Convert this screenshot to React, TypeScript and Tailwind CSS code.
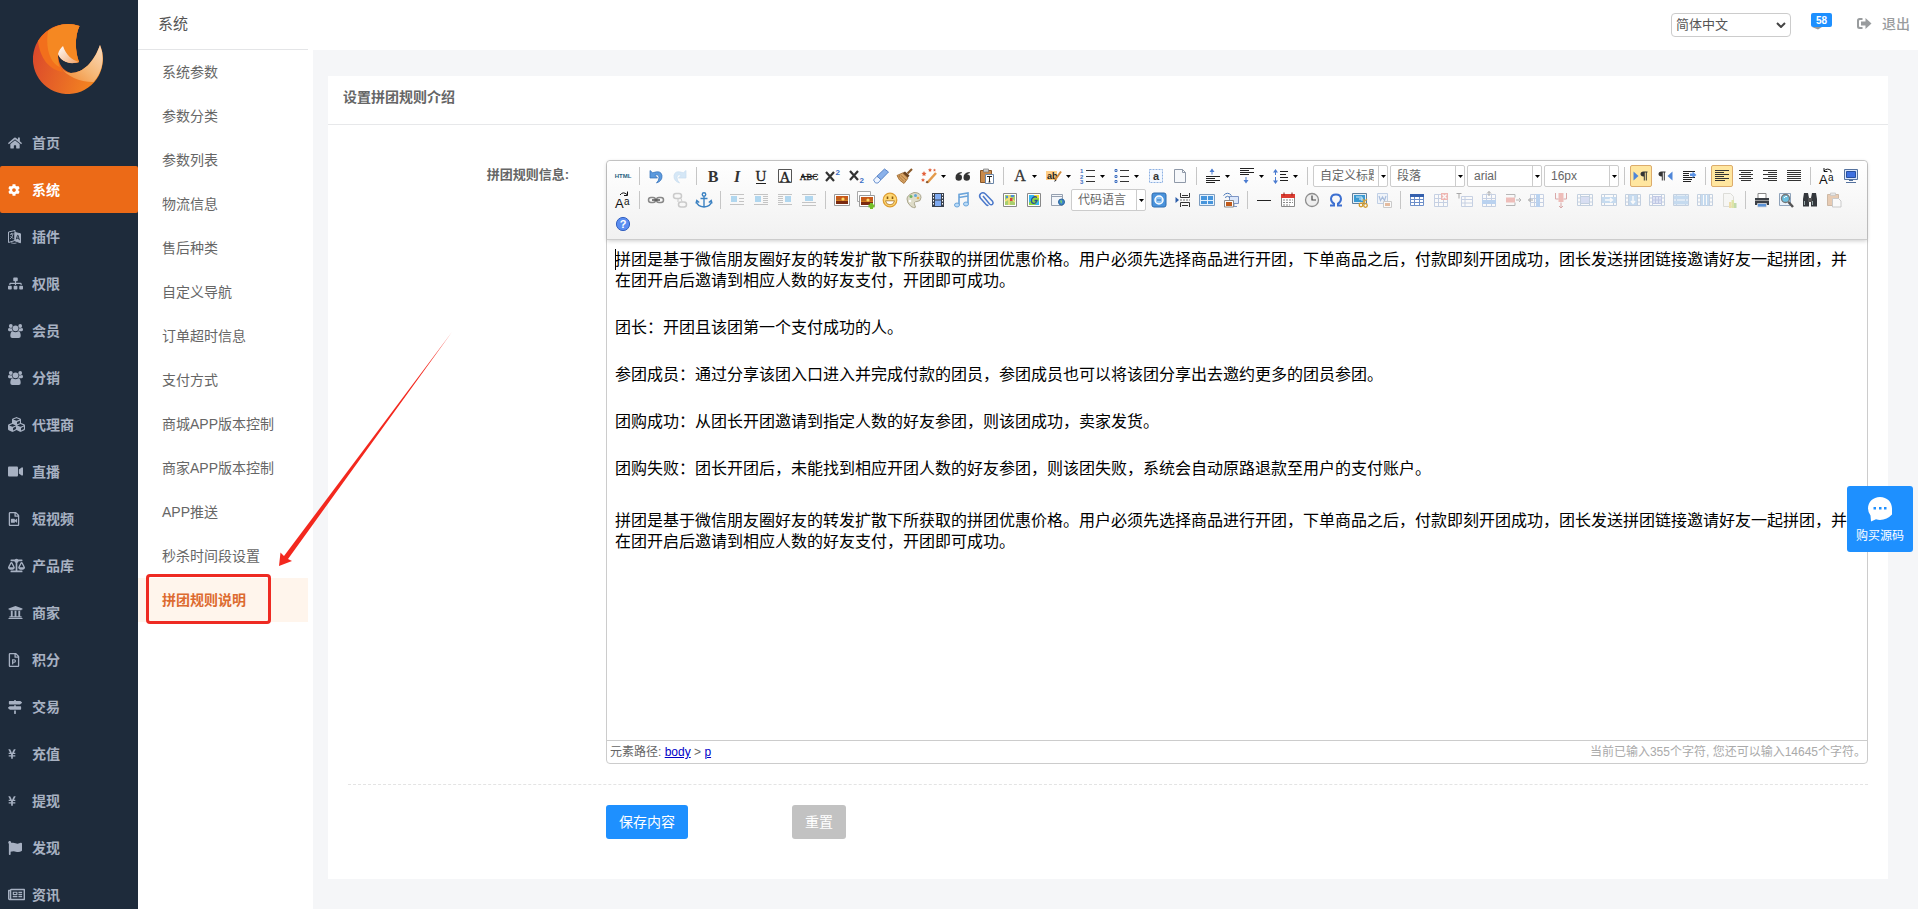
import type { ReactNode } from 'react'
import {
  FaBalanceScale,
  FaCog,
  FaCubes,
  FaFlag,
  FaHome,
  FaMapSigns,
  FaRegFilePowerpoint,
  FaRegFileVideo,
  FaRegNewspaper,
  FaSignOutAlt,
  FaSitemap,
  FaUniversity,
  FaVideo,
  FaYenSign,
} from 'react-icons/fa'

function GroupIcon() {
  return (
    <svg viewBox="0 0 15 14" className="h-3.5 w-[15px]" fill="currentColor">
      <circle cx="2.8" cy="2" r="1.9" />
      <circle cx="12.2" cy="2" r="1.9" />
      <circle cx="7.5" cy="4.3" r="2.9" />
      <path d="M0 5.5Q0 4 1 4q2 .8 3 .3Q4 6.300 5 7.200H1.200Q0 7 0 5.500zM15 5.500Q15 4 14 4q-2 .8-3 .3Q11 6.300 10 7.200h3.800Q15 7 15 5.500z" />
      <path d="M2.300 12Q2.300 7.300 4.800 7.300q2.700 1.800 5.400 0 2.500 0 2.500 4.700 0 2-2 2H4.300q-2 0-2-2z" />
    </svg>
  )
}

function LanguageIcon() {
  return (
    <svg viewBox="0 0 13 14" className="h-3.5 w-[13px]" fill="none" stroke="currentColor">
      <path d="M.5 2 7 .5v10L.5 12.500z" />
      <path d="M2 4.500l3.500-1M3.500 3v1.500M2 9q2.500-1.500 3-5M2.500 6q1 2 3 2.500" strokeWidth=".8" />
      <path d="M7 2.500l5.500 1.300v9L7 10.800z" fill="currentColor" />
      <path d="M8.300 9.300l1.200-4h.6l1.300 4.800M8.700 8l2.200.5" stroke="#1e2b3b" strokeWidth=".9" />
      <path d="M3 12.800q3 1.200 5.500.2" strokeWidth=".8" />
    </svg>
  )
}

const mainMenu: { label: string; icon: ReactNode }[] = [
  { label: '首页', icon: <FaHome className="h-3.5 w-3.5" /> },
  { label: '系统', icon: <FaCog className="h-3 w-3" /> },
  { label: '插件', icon: <LanguageIcon /> },
  { label: '权限', icon: <FaSitemap className="h-[15px] w-[15px]" /> },
  { label: '会员', icon: <GroupIcon /> },
  { label: '分销', icon: <GroupIcon /> },
  { label: '代理商', icon: <FaCubes className="h-[17px] w-[17px]" /> },
  { label: '直播', icon: <FaVideo className="h-[15px] w-[15px]" /> },
  { label: '短视频', icon: <FaRegFileVideo className="-ml-px h-3.5 w-3.5" /> },
  { label: '产品库', icon: <FaBalanceScale className="h-[17px] w-[17px]" /> },
  { label: '商家', icon: <FaUniversity className="h-[15px] w-[15px]" /> },
  { label: '积分', icon: <FaRegFilePowerpoint className="-ml-px h-3.5 w-3.5" /> },
  { label: '交易', icon: <FaMapSigns className="h-3.5 w-3.5" /> },
  { label: '充值', icon: <FaYenSign className="h-3 w-2" /> },
  { label: '提现', icon: <FaYenSign className="h-3 w-2" /> },
  { label: '发现', icon: <FaFlag className="h-3.5 w-3.5" /> },
  { label: '资讯', icon: <FaRegNewspaper className="h-[17px] w-[17px]" /> },
]

const subMenu = [
  '系统参数',
  '参数分类',
  '参数列表',
  '物流信息',
  '售后种类',
  '自定义导航',
  '订单超时信息',
  '支付方式',
  '商城APP版本控制',
  '商家APP版本控制',
  'APP推送',
  '秒杀时间段设置',
  '拼团规则说明',
]

const groupRule =
  '拼团是基于微信朋友圈好友的转发扩散下所获取的拼团优惠价格。用户必须先选择商品进行开团，下单商品之后，付款即刻开团成功，团长发送拼团链接邀请好友一起拼团，并在团开启后邀请到相应人数的好友支付，开团即可成功。'

const paragraphs = [
  '团长：开团且该团第一个支付成功的人。',
  '参团成员：通过分享该团入口进入并完成付款的团员，参团成员也可以将该团分享出去邀约更多的团员参团。',
  '团购成功：从团长开团邀请到指定人数的好友参团，则该团成功，卖家发货。',
  '团购失败：团长开团后，未能找到相应开团人数的好友参团，则该团失败，系统会自动原路退款至用户的支付账户。',
]

const serif = 'Liberation Serif, serif'
const sans = 'Liberation Sans, Arial, sans-serif'

const grid = (
  <path d="M3.500 4.500h13v12h-13zM3.500 8.500h13M3.500 12.500h13M7.500 4.500v12M12.500 4.500v12" fill="#fff" stroke="#7d97c4" />
)

const frame = (
  <path d="M2.500 4.500h15v11h-15zM2.500 8h3M2.500 12h3M14.500 8h3M14.500 12h3M5.500 4.500v11M14.500 4.500v11" fill="#fff" stroke="#7796bd" />
)

const caseSwap = (
  <>
    <text x="2" y="17.500" fontSize="13" fontFamily={sans} fill="#111">A</text>
    <text x="11" y="15" fontSize="10" fontFamily={sans} fill="#111">a</text>
  </>
)

const photo = (
  <>
    <path d="M2.500 4.500h15v11h-15z" fill="#fff" stroke="#9a9a9a" />
    <path d="M4 6h12v8H4z" fill="#7a2a10" />
    <path d="M4 6h12v3H4z" fill="#c85a1a" />
    <path d="M4 9.500h12v1.200H4z" fill="#f6a02c" />
    <circle cx="11" cy="9" r="1.600" fill="#ffd766" />
  </>
)

const icons: Record<string, ReactNode> = {
  html: <text x="10" y="12" fontSize="6" fontWeight="700" textAnchor="middle" fontFamily={sans} fill="#28627f">HTML</text>,
  undo: (
    <path d="M4 4.500v7.500h7.500L9 9.300q3.600-1.500 4 2 .2 3-2.500 5.700 6-2 5.500-7.500-1-5.800-9.300-2.700z" fill="#5c9ade" stroke="#2f6db8" strokeWidth=".7" />
  ),
  redo: (
    <path d="M16 4.500v7.500H8.500L11 9.300q-3.600-1.500-4 2-.2 3 2.500 5.700-6-2-5.500-7.500 1-5.800 9.300-2.700z" fill="#9cc8ee" stroke="#7fb2e0" strokeWidth=".7" />
  ),
  bold: <text x="10" y="16" fontSize="16" fontWeight="700" textAnchor="middle" fontFamily={serif} fill="#333">B</text>,
  italic: <text x="10" y="16" fontSize="16" fontWeight="700" fontStyle="italic" textAnchor="middle" fontFamily={serif} fill="#333">I</text>,
  underline: (
    <>
      <text x="10" y="15" fontSize="15" textAnchor="middle" fontFamily={serif} fill="#222" stroke="#222" strokeWidth=".3">U</text>
      <path d="M5 17.500h10" stroke="#222" />
    </>
  ),
  border: (
    <>
      <path d="M3.500 3.500h13v13h-13z" fill="none" stroke="#555" />
      <text x="10" y="15.500" fontSize="15" textAnchor="middle" fontFamily={serif} fill="#222" stroke="#222" strokeWidth=".3">A</text>
    </>
  ),
  strike: (
    <>
      <text x="10" y="14" fontSize="9" textAnchor="middle" fontFamily={serif} fill="#222" stroke="#222" strokeWidth=".3">ABC</text>
      <path d="M2 10.500h16" stroke="#222" />
    </>
  ),
  sup: (
    <>
      <path d="M3 6l8 9M11 6l-8 9" stroke="#333" strokeWidth="2.200" />
      <text x="12.500" y="8.500" fontSize="8" fontWeight="700" fontFamily={sans} fill="#3a6fc4">2</text>
    </>
  ),
  sub: (
    <>
      <path d="M3 5l8 9M11 5l-8 9" stroke="#333" strokeWidth="2.200" />
      <text x="12.500" y="17" fontSize="8" fontWeight="700" fontFamily={sans} fill="#3a6fc4">2</text>
    </>
  ),
  eraser: (
    <>
      <path d="M2.500 14 6 10.200l4 3.500L7 17H4.500z" fill="#eef4ff" stroke="#6c93ce" />
      <path d="M6 10.200 13.500 3l4 3L10 13.700z" fill="#8ab1ea" stroke="#5a84c6" />
    </>
  ),
  brush: (
    <>
      <path d="M17 3 12.500 7.500" stroke="#8a5a2b" strokeWidth="2.200" />
      <path d="M10 5.500l4.500 4-1.800 2.500-5.700-4.700z" fill="#6d4421" />
      <path d="M7.500 7 2 9.500q1.500 5 7 8l4-5.300z" fill="#d9a567" stroke="#9a6428" strokeWidth=".8" />
      <path d="M4 10.500l5 5M6 9.500l5 4.500M5 9l-1 2" stroke="#9a6428" strokeWidth=".7" />
    </>
  ),
  wand: (
    <>
      <path d="M17 7 8.500 16.500" stroke="#e39a4a" strokeWidth="2.500" />
      <path d="M8.800 16.800l-1.500-1.300" stroke="#7a4a22" strokeWidth="2" />
      <path d="M5 5l.8 1.700 1.700.3-1.300 1.200.3 1.800L5 9.200l-1.500.8.300-1.800L2.500 7l1.700-.3zM11 2l.6 1.300 1.400.2-1 1 .2 1.300-1.200-.6-1.200.6.200-1.300-1-1 1.400-.2zM4 12l.6 1.200 1.400.2-1 1 .2 1.300L4 15l-1.200.7.200-1.300-1-1 1.400-.2zM15.500 2.500l.4 1 1.100.2-.8.700.2 1-.9-.5-.9.500.2-1-.8-.7 1.100-.2z" fill="#e2603a" />
    </>
  ),
  quote: (
    <path d="M8.500 6Q2.500 6.500 2.500 11.500q0 3.200 3.200 3.200t3.300-3.200-2.800-3Q6.500 7.500 9 7zM16.500 6q-6 .5-6 5.500 0 3.200 3.200 3.200t3.300-3.200-2.800-3Q14.500 7.500 17 7z" fill="#333" />
  ),
  pasteText: (
    <>
      <path d="M3.500 4.500h11v12h-11z" fill="#c98a4b" stroke="#87572a" />
      <path d="M6.500 3h5v3h-5z" fill="#ccc" stroke="#777" strokeWidth=".7" />
      <path d="M8.500 8.500h8v9h-8z" fill="#fff" stroke="#6b86a8" />
      <path d="M10 10.500h5M12.500 10.500V16M11.500 16h2" stroke="#222" />
    </>
  ),
  foreColor: <text x="10" y="15" fontSize="16" textAnchor="middle" fontFamily={serif} fill="#333" stroke="#333" strokeWidth=".3">A</text>,
  backColor: (
    <>
      <path d="M2 5h11v9H2z" fill="#ffcf87" />
      <text x="3" y="12.500" fontSize="9" fontWeight="700" fontFamily={sans} fill="#222">ab</text>
      <path d="M17 5.500 11 14" stroke="#d08a3c" strokeWidth="2" />
      <path d="M11.300 13.500 10 16l2.500-1.500z" fill="#333" />
    </>
  ),
  orderedList: (
    <>
      <text x="2" y="7" fontSize="6" fontWeight="700" fontFamily={sans} fill="#3e6fc0">1</text>
      <text x="2" y="12.500" fontSize="6" fontWeight="700" fontFamily={sans} fill="#3e6fc0">2</text>
      <text x="2" y="18" fontSize="6" fontWeight="700" fontFamily={sans} fill="#3e6fc0">3</text>
      <path d="M8 4.500h9M8 10.500h9M8 15.500h9" stroke="#333" />
    </>
  ),
  bulletList: (
    <>
      <path d="M8 4.500h9M8 10.500h9M8 15.500h9" stroke="#333" />
      <path d="M3 3.500h2v2H3zM3 9.500h2v2H3zM3 14.500h2v2H3z" fill="#fff" stroke="#3e6fc0" />
    </>
  ),
  selectAll: (
    <>
      <rect x="3.500" y="3.500" width="13" height="13" fill="#f3f8ff" stroke="#8db1e2" strokeDasharray="2 1" />
      <text x="10" y="14" fontSize="11" fontWeight="700" textAnchor="middle" fontFamily={sans} fill="#333">a</text>
    </>
  ),
  clearDoc: <path d="M4.500 3.500h8l3 3v10h-11zM12.500 3.500v3h3" fill="#f6f8fb" stroke="#8f99a8" />,
  spaceTop: (
    <>
      <path d="M9 8.500V3.500" stroke="#4a7bd0" />
      <path d="M6.500 6 9 2.500 11.500 6z" fill="#4a7bd0" />
      <path d="M3 10.500h14M3 12.500h9M3 14.500h14M3 16.500h9" stroke="#222" />
    </>
  ),
  spaceBottom: (
    <>
      <path d="M3 2.500h14M3 4.500h9M3 6.500h14M3 8.500h9" stroke="#222" />
      <path d="M9 11v5" stroke="#4a7bd0" />
      <path d="M6.500 14 9 17.500l2.500-3.500z" fill="#4a7bd0" />
    </>
  ),
  lineHeight: (
    <>
      <path d="M4.500 4v13" stroke="#4a7bd0" strokeDasharray="5 2" />
      <path d="M2 6.500 4.500 3 7 6.500zM2 14.500 4.500 18 7 14.500z" fill="#4a7bd0" />
      <path d="M9 5.500h8M9 8.500h6M9 11.500h8M9 14.500h8" stroke="#222" />
    </>
  ),
  ltr: (
    <>
      <path d="M2.500 5.500v9L7.500 10z" fill="#4f86d8" />
      <path d="M16.500 5.500h-4q-3 .3-3 2.500t3 2.500h.3v4h1v-8h1v8h1v-8h.7z" fill="#333" />
    </>
  ),
  rtl: (
    <>
      <path d="M17.500 5.500v9L12.500 10z" fill="#4f86d8" />
      <path d="M10.500 5.500h-4q-3 .3-3 2.500t3 2.500h.3v4h1v-8h1v8h1v-8h.7z" fill="#333" />
    </>
  ),
  indent: (
    <>
      <path d="M4 5.500h12M4 7.500h6M4 9.500h6M4 11.500h12M4 13.500h9M4 15.500h8" stroke="#222" />
      <path d="M11 7.500h2.500v-2L17.500 9l-4 3v-2H11z" fill="#5b93e6" />
    </>
  ),
  alignLeft: <path d="M3 4.500h14M3 6.500h9M3 8.500h14M3 10.500h9M3 12.500h14M3 14.500h10" stroke="#333" />,
  alignCenter: <path d="M3 4.500h14M5 6.500h10M3 8.500h14M5 10.500h10M3 12.500h14M5 14.500h10" stroke="#333" />,
  alignRight: <path d="M3 4.500h14M8 6.500h9M3 8.500h14M8 10.500h9M3 12.500h14M8 14.500h9" stroke="#333" />,
  justify: <path d="M3 4.500h14M3 6.500h14M3 8.500h14M3 10.500h14M3 12.500h14M3 14.500h14" stroke="#333" />,
  toUpper: (
    <>
      {caseSwap}
      <path d="M7 5q3-3.500 7-.5v2M7 2v3.500h3.500" fill="none" stroke="#111" />
    </>
  ),
  toLower: (
    <>
      {caseSwap}
      <path d="M7 5q3-4 7-.5M14.500 1.500v4H11" fill="none" stroke="#111" />
    </>
  ),
  fullscreen: (
    <>
      <path d="M3.500 3.500h13v10h-13z" fill="#dbe6fa" stroke="#55729e" />
      <path d="M5.500 5.500h9v6h-9z" fill="#3d6fe0" stroke="#274f9e" />
      <path d="M5 16.500h10M8 14.500h4" stroke="#55729e" />
    </>
  ),
  link: (
    <>
      <rect x="2.500" y="7.500" width="7" height="5" rx="2.500" fill="none" stroke="#888" strokeWidth="1.500" />
      <rect x="10.500" y="7.500" width="7" height="5" rx="2.500" fill="none" stroke="#888" strokeWidth="1.500" />
      <path d="M6 10h8" stroke="#555" strokeWidth="1.500" />
    </>
  ),
  unlink: (
    <>
      <rect x="3.500" y="3.500" width="8" height="5" rx="2.500" fill="none" stroke="#888" strokeWidth="1.500" />
      <rect x="8.500" y="12" width="8" height="5" rx="2.500" fill="none" stroke="#888" strokeWidth="1.500" />
      <path d="M8 9v3M11 8.500l1 3" stroke="#888" />
    </>
  ),
  anchor: (
    <path d="M10 6.500V17M6.500 8.500h7M2.500 11q.5 5.500 7.500 6 7-.5 7.500-6M2 13.500l.8-3 2.400 2M18 13.500l-.8-3-2.400 2M10 2.800a1.700 1.700 0 1 1 0 3.500 1.700 1.700 0 0 1 0-3.500" fill="none" stroke="#3c82c2" strokeWidth="1.400" />
  ),
  floatLeft: (
    <>
      <path d="M3 4.500h14M12 8.500h5M12 11.500h5M3 14.500h14" stroke="#777" />
      <path d="M4 6h6v6H4z" fill="#4aa6e2" />
    </>
  ),
  floatNone: (
    <>
      <path d="M3 4.500h14M12 6.500h5M12 8.500h5M12 10.500h5M12 12.500h5M3 14.500h14" stroke="#777" />
      <path d="M4 6h6v6H4z" fill="#4aa6e2" />
    </>
  ),
  floatRight: (
    <>
      <path d="M3 4.500h14M3 6.500h5M3 8.500h5M3 10.500h5M3 12.500h5M3 14.500h14" stroke="#777" />
      <path d="M10 6h6v6h-6z" fill="#4aa6e2" />
    </>
  ),
  floatCenter: (
    <>
      <path d="M3 4.500h14M3 12.500h14M3 15.500h14" stroke="#777" />
      <path d="M6 6h8v5H6z" fill="#4aa6e2" />
    </>
  ),
  image: photo,
  images: (
    <>
      <path d="M1.500 1.500h13v10h-13z" fill="#fff" stroke="#aaa" />
      <g transform="translate(1 1)">{photo}</g>
      <path d="M15.500 13v6M12.500 16h6" stroke="#74bf2c" strokeWidth="3" />
    </>
  ),
  emoji: (
    <>
      <circle cx="10" cy="10" r="6.800" fill="#ffd873" stroke="#dd9c32" strokeWidth="1.200" />
      <path d="M7.500 6.500V9M12.500 6.500V9" stroke="#8a5a12" strokeWidth="1.600" />
      <path d="M5.500 10.800h9q-.6 4-4.500 4t-4.500-4z" fill="#fff" stroke="#a8701c" strokeWidth=".8" />
    </>
  ),
  scrawl: (
    <>
      <path d="M10 2.500q7 0 7 5 0 4-4 4t-2 4-4 1Q3 13 3 9t7-6.500z" fill="#dedcc8" stroke="#aaa58c" />
      <circle cx="7" cy="6.500" r="1.500" fill="#70b560" />
      <circle cx="11.500" cy="5.500" r="1.500" fill="#5fa6db" />
      <circle cx="14" cy="8" r="1.300" fill="#e8b04e" />
      <circle cx="6" cy="11" r="1.300" fill="#fff" />
    </>
  ),
  video: (
    <>
      <path d="M4 3h12v14H4z" fill="#39414e" />
      <path d="M7 4h6v5.500H7zM7 10.500h6V16H7z" fill="#7faaf0" />
      <path d="M5.500 4v12M14.500 4v12" stroke="#fff" strokeDasharray="1.500 1.500" />
    </>
  ),
  music: (
    <>
      <path d="M7 15V4.500l9-1.500v10.500M7 7.500 16 6" fill="none" stroke="#6ba4da" strokeWidth="1.600" />
      <ellipse cx="5" cy="15" rx="2.500" ry="2" fill="#b9dbf8" stroke="#6ba4da" />
      <ellipse cx="14" cy="14" rx="2.500" ry="2" fill="#b9dbf8" stroke="#6ba4da" />
    </>
  ),
  attachment: (
    <path d="M7 6l6.500 8q1.800 1.500 3 .3 1.200-1.300 0-3L9.500 4Q7 1.800 4.800 3.500 2.500 5.500 4.500 8.200L10.500 15q1 .8 1.800 0" fill="none" stroke="#4a78ca" strokeWidth="1.500" />
  ),
  map: (
    <>
      <path d="M3.500 3.500h13v13h-13z" fill="#fff" stroke="#888" />
      <path d="M5 5h10v10H5z" fill="#a8cf6f" />
      <path d="M5 11l5-3 5 4M9 5v10" stroke="#f6e07e" strokeWidth="1.500" fill="none" />
      <path d="M6 6h2v2H6zM11 5h3v2h-3z" fill="#4e8dd8" />
      <path d="M10 8h2.500v3H10z" fill="#d4453c" />
    </>
  ),
  gmap: (
    <>
      <path d="M3.500 3.500h13v13h-13z" fill="#fff" stroke="#888" />
      <path d="M5 5h10v10H5z" fill="#8fd63c" />
      <path d="M5 5h6L5 13zM11 15l4-5v5z" fill="#35b7f0" />
      <path d="M10 5h5v3h-4z" fill="#f4e034" />
      <path d="M13 7.500q-2-1.500-4 0t-1.500 4 4 1.500l1.500-2.500h-2.500" fill="none" stroke="#244f9e" strokeWidth="1.300" />
    </>
  ),
  insertFrame: (
    <>
      <path d="M3.500 4.500h11v11h-11zM3.500 6.500h11" fill="#f3f6fa" stroke="#95a0b0" />
      <circle cx="13.500" cy="12" r="3" fill="#3c86c8" stroke="#2c649b" />
      <path d="M12 10.500q2-1 2 1t-1 2z" fill="#7fd06a" />
    </>
  ),
  webapp: (
    <>
      <rect x="3" y="3" width="14" height="14" rx="2" fill="#4a93dc" stroke="#2e6cb0" />
      <circle cx="10" cy="10" r="4" fill="#8cc3f5" stroke="#fff" strokeWidth="1.500" />
      <path d="M8 10h4" stroke="#2e6cb0" />
    </>
  ),
  pageBreak: (
    <>
      <path d="M7.500 3v4.500h9V3M7.500 17v-4.500h9V17M9 5.500h6M9 15.500h6" fill="none" stroke="#333" />
      <path d="M2.500 7v6L6 10z" fill="#2c5da8" />
      <path d="M7 10h10" stroke="#777" strokeDasharray="2 1" />
    </>
  ),
  template: (
    <>
      <path d="M2.500 4.500h15v11h-15z" fill="#e4f1fd" stroke="#7b9cc0" />
      <path d="M4 6h6v4H4zM11 6h5v4h-5zM4 11h6v3H4zM11 11h5v3h-5z" fill="#4695dc" />
    </>
  ),
  screenshot: (
    <>
      <path d="M8.500 6.500h9v7h-9z" fill="#dbe7fb" stroke="#7d95c4" />
      <path d="M13 14v2.500M10 16.500h6" stroke="#7d95c4" />
      <path d="M2.500 5.500q4-4.500 8 0M4 7.500q2.500-2.500 5 0" fill="none" stroke="#4a78b8" />
      <path d="M3.500 10.500h9v6.500h-9z" fill="#fff" stroke="#888" />
      <path d="M5 12h6v4H5z" fill="#c25a1a" />
    </>
  ),
  rule: <path d="M3 10.500h14" stroke="#222" />,
  date: (
    <>
      <path d="M3.500 4.500h13v12h-13z" fill="#fff" stroke="#888" />
      <path d="M3 4h14v4H3z" fill="#dc3c32" />
      <path d="M6 2.500v3M14 2.500v3" stroke="#8a1c16" />
      <path d="M5 10h10M5 12.500h10M5 15h7" stroke="#888" strokeDasharray="2 1" strokeWidth="1.200" />
    </>
  ),
  time: (
    <>
      <circle cx="10" cy="10" r="6.500" fill="#eee" stroke="#8d8d8d" strokeWidth="1.300" />
      <path d="M10 5.500V10h4" fill="none" stroke="#444" strokeWidth="1.200" />
    </>
  ),
  omega: <path d="M4 15.500h4v-1.800Q5 12 5 8.800q.3-4.300 5-4.300t5 4.300q0 3.200-3 4.900v1.800h4" fill="none" stroke="#3c6fd0" strokeWidth="2" />,
  snap: (
    <>
      <path d="M2.500 3.500h14v10h-14z" fill="#e4eef6" stroke="#5f7f9c" />
      <path d="M4 5h11v7H4z" fill="#3a9ad2" />
      <path d="M6 7h6v4M9 9h4" stroke="#cfeafb" fill="none" />
      <circle cx="11" cy="15" r="1.800" fill="none" stroke="#d09a2c" strokeWidth="1.300" />
      <circle cx="15.500" cy="15.500" r="1.800" fill="none" stroke="#d09a2c" strokeWidth="1.300" />
      <path d="M12 13.500 17 9M15 13.500 13 9" stroke="#d8a43c" strokeWidth="1.200" />
    </>
  ),
  wordImage: (
    <>
      <path d="M3.500 3.500h10v10h-10z" fill="#e4eefb" stroke="#6d93c8" />
      <path d="M5 6l1.500 4.500L8.500 7l2 3.500L12 6" fill="none" stroke="#3467b4" strokeWidth="1.200" />
      <path d="M9.500 11.500h8v6h-8z" fill="#fff" stroke="#888" />
      <path d="M11 13h5v3h-5z" fill="#c8641e" />
    </>
  ),
  table: (
    <>
      <path d="M3.500 4.500h13v11h-13zM3.500 9.500h13M3.500 12.500h13M7.500 5v10.500M12.500 5v10.500" fill="#fff" stroke="#6d8fc9" />
      <path d="M3 4h14v3H3z" fill="#3560ad" />
    </>
  ),
  deleteTable: (
    <>
      {grid}
      <path d="M10 3h7v7h-7z" fill="#e0574d" />
      <path d="M11.500 4.500l4 4M15.500 4.500l-4 4" stroke="#fff" strokeWidth="1.300" />
    </>
  ),
  titleRow: (
    <>
      <path d="M6.500 6.500h11v10h-11zM6.500 9.500h11M6.500 13h11M10 6.500v10" fill="#fff" stroke="#7d97c4" />
      <path d="M1.500 3.500h5M4 3.500v5" stroke="#333" />
    </>
  ),
  insertRow: (
    <>
      {grid}
      <path d="M3 10h14v4H3z" fill="#5e9be4" />
      <path d="M10 6V1.500M8 3.500l2-2 2 2" fill="none" stroke="#333" />
    </>
  ),
  deleteRow: (
    <>
      <path d="M3 7.500h9v5H3z" fill="#e0665c" />
      <path d="M3 4.500h9v3M3 15.500h9v-3M13 10h5M16 8l2 2-2 2" fill="none" stroke="#555" />
    </>
  ),
  insertCol: (
    <>
      {grid}
      <path d="M9 4h4v13H9z" fill="#5e9be4" />
      <path d="M6 10H1.500M3.500 8l-2 2 2 2" fill="none" stroke="#333" />
    </>
  ),
  deleteCol: (
    <>
      <path d="M7.500 3h5v9h-5z" fill="#e0665c" />
      <path d="M4.500 3v6h3M15.500 3v6h-3M10 12.500V18M8 16l2 2 2-2" fill="none" stroke="#a33" />
    </>
  ),
  mergeCells: (
    <>
      {frame}
      <path d="M5.500 6.500h9v7h-9z" fill="#aab9ea" stroke="#7796bd" />
    </>
  ),
  mergeRight: (
    <>
      {frame}
      <path d="M3 7h14v6H3z" fill="#7cb0e4" />
      <path d="M6 10h7M11 8l2.500 2-2.500 2" fill="none" stroke="#fff" strokeWidth="1.400" />
    </>
  ),
  mergeDown: (
    <>
      {frame}
      <path d="M6 5h8v10H6z" fill="#7cb0e4" />
      <path d="M10 6v7M8 11l2 2.500 2-2.500" fill="none" stroke="#fff" strokeWidth="1.400" />
    </>
  ),
  splitCells: (
    <>
      {frame}
      <path d="M5.500 6.500h9v7h-9zM5.500 10h9M8.500 6.500v7M11.500 6.500v7" fill="#b6c3ee" stroke="#6e83c8" />
    </>
  ),
  splitRows: (
    <>
      {frame}
      <path d="M3 5.500h14v4H3zM3 10.500h14v4H3z" fill="#7cb0e4" />
    </>
  ),
  splitCols: (
    <>
      {frame}
      <path d="M6 4.500h2v11H6zM9 4.500h2v11H9zM12 4.500h2v11h-2z" fill="#7cb0e4" />
    </>
  ),
  charts: (
    <>
      <path d="M4.500 3.500h7l3 3v10h-10z" fill="#f5f5f0" stroke="#b4b4a8" />
      <path d="M10 12h2.500v6H10z" fill="#e0b83c" />
      <path d="M12.500 10h2.500v8h-2.500z" fill="#b8c830" />
      <path d="M15 13h2.500v5H15z" fill="#74b03c" />
    </>
  ),
  print: (
    <>
      <path d="M6 3.500h8v5H6z" fill="#fff" stroke="#888" />
      <path d="M3 8h14v7H3z" fill="#3b3f45" />
      <path d="M3 10.500h14" stroke="#999" />
      <path d="M5.500 13.500h9v3.500h-9z" fill="#5b92d6" stroke="#ddd" strokeWidth=".8" />
    </>
  ),
  preview: (
    <>
      <path d="M3.500 3.500h11v12h-11z" fill="#eaf2fb" stroke="#8fa3ba" />
      <circle cx="9.500" cy="8.500" r="4" fill="#6cc0e0" stroke="#777" strokeWidth="1.300" />
      <path d="M8 8q1-2 3-1.500" stroke="#fff" fill="none" />
      <path d="M12.500 12l4.500 5" stroke="#555" strokeWidth="2.500" />
    </>
  ),
  search: (
    <>
      <path d="M4 3h4l1 5v8.500H3V9zM12 3h4l1 6v7.500h-6V8z" fill="#34383d" />
      <path d="M8 8h4v4H8z" fill="#555" />
      <path d="M4.500 11v4M12.500 11v4" stroke="#9aa" />
    </>
  ),
  paste: (
    <>
      <path d="M3.500 4.500h11v11h-11z" fill="#d08a4e" stroke="#8f5c2c" />
      <path d="M6.500 3h5v2.500h-5z" fill="#ccc" stroke="#777" strokeWidth=".7" />
      <path d="M8.500 8.500h6l2.500 2.500v6H8.500z" fill="#fff" stroke="#888" />
    </>
  ),
  help: (
    <>
      <circle cx="10" cy="10" r="6.600" fill="#5a8df0" stroke="#3561c0" />
      <text x="10" y="14" fontSize="11" fontWeight="700" textAnchor="middle" fontFamily={sans} fill="#fff">?</text>
    </>
  ),
}

type Tool =
  | { kind: 'button'; name: string; off?: boolean; active?: boolean; split?: boolean }
  | { kind: 'combo'; name: string }
  | { kind: 'sep' }

const sep: Tool = { kind: 'sep' }
const buttons = (...names: string[]): Tool[] => names.map((name) => ({ kind: 'button', name }))
const disabled = (...names: string[]): Tool[] => names.map((name) => ({ kind: 'button', name, off: true }))
const split = (...names: string[]): Tool[] => names.map((name) => ({ kind: 'button', name, split: true }))
const active = (name: string): Tool => ({ kind: 'button', name, active: true })
const combo = (name: string): Tool => ({ kind: 'combo', name })

const tools: Tool[] = [
  ...buttons('html'),
  sep,
  ...buttons('undo'),
  ...disabled('redo'),
  sep,
  ...buttons('bold', 'italic', 'underline', 'border', 'strike', 'sup', 'sub', 'eraser', 'brush'),
  ...split('wand'),
  ...buttons('quote', 'pasteText'),
  sep,
  ...split('foreColor', 'backColor', 'orderedList', 'bulletList'),
  ...buttons('selectAll', 'clearDoc'),
  sep,
  ...split('spaceTop', 'spaceBottom', 'lineHeight'),
  sep,
  combo('自定义标题'),
  combo('段落'),
  combo('arial'),
  combo('16px'),
  sep,
  active('ltr'),
  ...buttons('rtl', 'indent'),
  sep,
  active('alignLeft'),
  ...buttons('alignCenter', 'alignRight', 'justify'),
  sep,
  ...buttons('toUpper', 'fullscreen', 'toLower'),
  sep,
  ...buttons('link'),
  ...disabled('unlink'),
  ...buttons('anchor'),
  sep,
  ...disabled('floatLeft', 'floatNone', 'floatRight', 'floatCenter'),
  sep,
  ...buttons('image', 'images', 'emoji', 'scrawl', 'video', 'music', 'attachment', 'map', 'gmap', 'insertFrame'),
  combo('代码语言'),
  ...buttons('webapp', 'pageBreak', 'template', 'screenshot'),
  sep,
  ...buttons('rule', 'date', 'time', 'omega', 'snap'),
  ...disabled('wordImage'),
  sep,
  ...buttons('table'),
  ...disabled(
    'deleteTable',
    'titleRow',
    'insertRow',
    'deleteRow',
    'insertCol',
    'deleteCol',
    'mergeCells',
    'mergeRight',
    'mergeDown',
    'splitCells',
    'splitRows',
    'splitCols',
    'charts',
  ),
  sep,
  ...buttons('print', 'preview', 'search'),
  ...disabled('paste'),
  ...buttons('help'),
]

function Caret() {
  return (
    <svg viewBox="0 0 5 3" className="h-[3px] w-[5px] shrink-0" fill="#000">
      <path d="M0 0h5L2.500 3z" />
    </svg>
  )
}

function ToolItem({ tool }: { tool: Tool }) {
  if (tool.kind === 'sep') {
    return <span className="mx-1 h-[18px] w-px bg-[#c6c6c6]" />
  }

  if (tool.kind === 'combo') {
    return (
      <span className="mx-px flex h-[22px] w-[75px] rounded-xs border border-[#ccc] bg-white">
        <select
          aria-label={tool.name}
          className="w-[60px] appearance-none overflow-hidden pl-1.5 text-xs leading-5 text-[#666] outline-none"
        >
          <option>{tool.name}</option>
        </select>
        <span className="ml-1 flex flex-1 items-center justify-center border-l border-[#ccc]">
          <Caret />
        </span>
      </span>
    )
  }

  const width = tool.split ? 'w-8' : 'w-[22px]'
  const state = tool.active ? 'border-[#dcac6c] bg-[#ffe69f]' : 'border-transparent'
  return (
    <button
      type="button"
      aria-label={tool.name}
      disabled={tool.off}
      className={`mx-px flex h-[22px] items-center gap-0.5 rounded-xs border ${width} ${state}`}
    >
      <svg viewBox="0 0 20 20" className={`h-5 w-5 shrink-0 ${tool.off ? 'opacity-40' : ''}`}>
        {icons[tool.name]}
      </svg>
      {tool.split && <Caret />}
    </button>
  )
}

function Logo() {
  return (
    <svg viewBox="0 0 70 70" className="ml-[33px] h-[70px] w-[70px]">
      <defs>
        <linearGradient id="ring" x1="0" y1=".5" x2="1" y2=".8">
          <stop offset="0" stopColor="#dc4b2b" />
          <stop offset="1" stopColor="#f68c1f" />
        </linearGradient>
        <linearGradient id="band" x1="0" y1="1" x2="1" y2="0">
          <stop offset="0" stopColor="#f2852c" />
          <stop offset=".5" stopColor="#f6b877" />
          <stop offset="1" stopColor="#fbdcc0" />
        </linearGradient>
        <linearGradient id="tip" x1="0" y1="0" x2="1" y2="1">
          <stop offset="0" stopColor="#fff" />
          <stop offset="1" stopColor="#f0a268" />
        </linearGradient>
      </defs>
      <path d="M46.500 2A35 35 0 1 0 67 21C61 38 50 49 38 49 30 47 25 40 25 30 28 37 37 41 46 38 42 28 41.500 12 46.500 2Z" fill="url(#ring)" />
      <path d="M46.500 2A35 35 0 0 0 5 17C7 34 16 46 30 48 25 40 25 36 25 30 28 37 37 41 46 38 42 28 41.500 12 46.500 2Z" fill="#f26f1c" />
      <path d="M46.500 2A35 35 0 0 0 15 7C12 26 18 40 27 43 25 40 25 36 25 30 28 37 37 41 46 38 42 28 41.500 12 46.500 2Z" fill="#f58822" />
      <path d="M67 21A35 35 0 0 1 60.500 58C46 58 34 52 27 43 30 47 34 49 38 49 50 49 61 38 67 21Z" fill="url(#band)" />
      <path d="M30 22C33 31 39 36 46 38 37 41 28 38 25 30 26 26 28 24 30 22Z" fill="url(#tip)" />
    </svg>
  )
}

function Sidebar() {
  return (
    <aside className="w-[138px] shrink-0 bg-[#1e2b3b] pt-6">
      <Logo />
      <nav className="mt-[25px]">
        {mainMenu.map((item) => (
          <a
            key={item.label}
            href="#"
            className={`flex h-[47px] items-center rounded-xs pl-2 text-sm font-bold ${
              item.label === '系统' ? 'bg-[#ec6a17] text-white' : 'text-[#a7b1c2]'
            }`}
          >
            <span className="flex w-6 items-center">{item.icon}</span>
            {item.label}
          </a>
        ))}
      </nav>
    </aside>
  )
}

function SubMenu() {
  return (
    <div className="w-[175px] shrink-0 bg-white pr-[5px]">
      <h2 className="flex h-[50px] items-center border-b border-[#e4e5e7] pl-5 text-[15px] text-[#555]">系统</h2>
      <nav>
        {subMenu.map((label) => {
          const current = label === '拼团规则说明'
          return (
            <a
              key={label}
              href="#"
              className={`relative flex h-11 items-center pl-6 text-sm ${
                current ? 'bg-[#fff5ec] font-bold text-[#dd6b30]' : 'text-[#666]'
              }`}
            >
              {label}
              {current && (
                <span className="absolute -top-1 left-2 h-[50px] w-[125px] rounded-sm border-3 border-[#ee2a22]" />
              )}
            </a>
          )
        })}
      </nav>
    </div>
  )
}

function TopBar() {
  return (
    <header className="flex h-[50px] items-center justify-end bg-white pr-2 pb-0.5">
      <div className="relative">
        <select
          aria-label="语言"
          className="h-6 w-[120px] appearance-none rounded-sm border border-[#ccc] bg-white pl-1 text-[13px] leading-5 text-[#555]"
        >
          <option>简体中文</option>
        </select>
        <svg viewBox="0 0 10 6" className="pointer-events-none absolute top-[10px] right-[5px] h-1.5 w-2.5">
          <path d="M1 1l4 4 4-4" fill="none" stroke="#444" strokeWidth="2" />
        </svg>
      </div>
      <a href="#" className="relative mb-2 ml-5 flex h-3.5 w-[21px] items-center justify-center rounded-xs bg-[#1e90ff] text-[10px] font-bold text-white">
        58
        <svg viewBox="0 0 14 3" className="absolute top-3.5 left-0 h-[3px] w-3.5">
          <path d="M1 0h10L7 2.500z" fill="#999" />
        </svg>
      </a>
      <a href="#" className="ml-6 flex items-center gap-2.5 text-sm font-medium text-[#999c9e]">
        <svg viewBox="0 0 16 14" className="h-3.5 w-4" fill="currentColor">
          <path d="M6.500 1v2H4Q3 3 3 4v5q0 1 1 1h2.500v2H3.500Q1 12 1 9.500v-6Q1 1 3.500 1z" />
          <path d="M5 4.500h4.500V1L15.500 6.500 9.500 12V8.500H5z" />
        </svg>
        退出
      </a>
    </header>
  )
}

function Editor() {
  return (
    <div className="flex-1 rounded-sm border border-[#ccc] bg-white">
      <div className="flex flex-wrap rounded-t-sm border-b border-[#ccc] bg-linear-to-b from-white to-[#f1f1f1] py-[3px] pr-0.5 pl-1 shadow-[0_1px_4px_rgba(0,0,0,0.2)]">
        {tools.map((tool, i) => (
          <span key={i} className="flex h-6 items-center">
            <ToolItem tool={tool} />
          </span>
        ))}
      </div>
      <div
        role="textbox"
        aria-labelledby="rule-label"
        contentEditable
        suppressContentEditableWarning
        className="min-h-[500px] px-2 pt-[9px] text-base leading-[21px] text-black outline-none"
      >
        <p className="relative mb-[26px]">
          <span className="absolute top-0 left-0 h-[21px] w-px bg-black" />
          {groupRule}
        </p>
        {paragraphs.map((text) => (
          <p key={text} className="mb-[26px]">
            {text}
          </p>
        ))}
        <p className="mt-[31px]">{groupRule}</p>
      </div>
      <div className="flex h-[23px] items-center justify-between border-t border-[#ccc] pr-px pl-[3px] text-xs">
        <span className="text-[#666]">
          元素路径:{' '}
          <a href="#" className="text-[#0000c8] underline">body</a> &gt;{' '}
          <a href="#" className="text-[#0000c8] underline">p</a>
        </span>
        <span className="text-[#aaa]">当前已输入355个字符, 您还可以输入14645个字符。</span>
      </div>
    </div>
  )
}

export default function App() {
  return (
    <div className="relative flex h-screen overflow-hidden bg-[#f5f6f8] font-['Liberation_Sans','Noto_Sans_CJK_SC',sans-serif]">
      <Sidebar />
      <SubMenu />
      <div className="flex min-w-0 flex-1 flex-col">
        <TopBar />
        <main className="mt-[26px] mr-[30px] ml-[15px] bg-white">
          <h1 className="flex h-[49px] items-center border-b border-[#e7e8ea] px-[15px] pb-1.5 text-sm font-bold text-[#666]">
            设置拼团规则介绍
          </h1>
          <form className="px-5 pb-10">
            <div className="flex pt-[35px]">
              <span id="rule-label" className="w-[258px] shrink-0 pt-1 pr-[37px] text-right text-[13px] leading-[22px] font-bold text-[#666]">
                拼团规则信息:
              </span>
              <Editor />
            </div>
            <hr className="mt-5 border-t border-dashed border-[#e4e4e4]" />
            <div className="mt-5 ml-[258px] flex gap-[104px]">
              <button type="submit" className="h-[34px] w-[82px] rounded-[3px] bg-[#1e90ff] text-sm text-white">
                保存内容
              </button>
              <button type="reset" className="h-[34px] w-[54px] rounded-[3px] bg-[#c2c2c2] text-sm text-white">
                重置
              </button>
            </div>
          </form>
        </main>
      </div>

      {/* pointer to the current submenu item */}
      <svg viewBox="0 0 180 240" className="pointer-events-none absolute top-[330px] left-[276px] h-[240px] w-[180px]">
        <path d="M176 2 12 229l4 2L3 236 4.500 222.500 8 226z" fill="#f3281e" />
      </svg>

      <button
        type="button"
        className="absolute top-[486px] right-[5px] flex h-[66px] w-[66px] flex-col items-center rounded-[3px] bg-[#1e90ff] pt-2.5 text-xs text-white"
      >
        <svg viewBox="0 0 26 26" className="h-[26px] w-[26px]">
          <path d="M13 1C6 1 1 6 1 12.500q0 3.500 2.500 7l.5 6 5-2.200q2 .7 4 .7 7-.2 12-5.500V12.500C25 6 20 1 13 1z" fill="#fff" />
          <path d="M6.500 11h2.500v2.500H6.500zM12 11h2.500v2.500H12zM17 11h2.500v2.500H17z" fill="#1e90ff" />
        </svg>
        <span className="mt-1.5">购买源码</span>
      </button>
    </div>
  )
}
